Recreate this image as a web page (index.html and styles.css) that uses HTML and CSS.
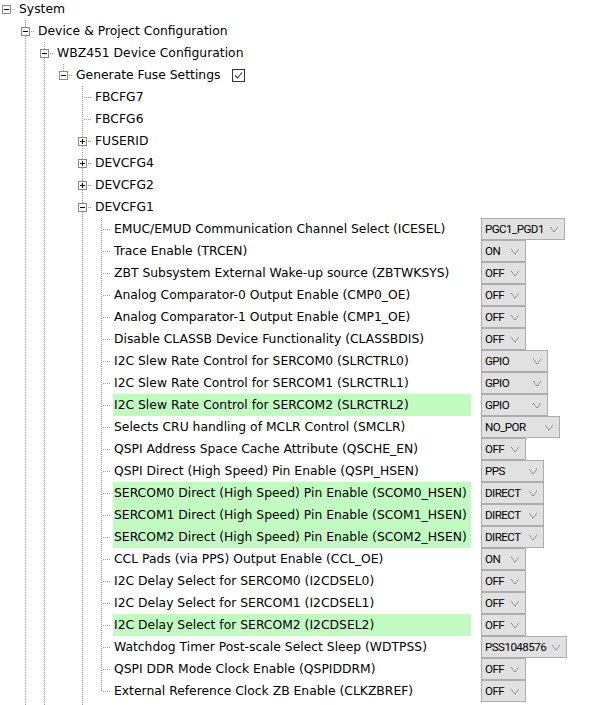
FILE: index.html
```html
<!DOCTYPE html>
<html>
<head>
<meta charset="utf-8">
<link rel="stylesheet" href="styles.css">
</head>
<body>
<div class="tree">
  <div class="row"><span class="c nd"><span class="bx mi"></span></span><span class="lbl">System</span></div>
  <div class="row"><span class="c"></span><span class="c nd up dn"><span class="bx mi"></span></span><span class="lbl">Device &amp; Project Configuration</span></div>
  <div class="row"><span class="c"></span><span class="c v"></span><span class="c nd up dn"><span class="bx mi"></span></span><span class="lbl">WBZ451 Device Configuration</span></div>
  <div class="row"><span class="c"></span><span class="c v"></span><span class="c v"></span><span class="c nd up"><span class="bx mi"></span></span><span class="lbl">Generate Fuse Settings</span>
    <svg class="chk" width="13" height="13" viewBox="0 0 13 13"><rect x="0.5" y="0.5" width="12" height="12" fill="#fff" stroke="#333"/><polyline points="3,6.5 5.5,9 10,3.5" fill="none" stroke="#333" stroke-width="1.1"/></svg>
  </div>
  <div class="row"><span class="c"></span><span class="c v"></span><span class="c v"></span><span class="c"></span><span class="c t"></span><span class="lbl">FBCFG7</span></div>
  <div class="row"><span class="c"></span><span class="c v"></span><span class="c v"></span><span class="c"></span><span class="c t"></span><span class="lbl">FBCFG6</span></div>
  <div class="row"><span class="c"></span><span class="c v"></span><span class="c v"></span><span class="c"></span><span class="c nd up dn"><span class="bx pl"></span></span><span class="lbl">FUSERID</span></div>
  <div class="row"><span class="c"></span><span class="c v"></span><span class="c v"></span><span class="c"></span><span class="c nd up dn"><span class="bx pl"></span></span><span class="lbl">DEVCFG4</span></div>
  <div class="row"><span class="c"></span><span class="c v"></span><span class="c v"></span><span class="c"></span><span class="c nd up dn"><span class="bx pl"></span></span><span class="lbl">DEVCFG2</span></div>
  <div class="row"><span class="c"></span><span class="c v"></span><span class="c v"></span><span class="c"></span><span class="c nd up dn"><span class="bx mi"></span></span><span class="lbl">DEVCFG1</span></div>

  <div class="row"><span class="c"></span><span class="c v"></span><span class="c v"></span><span class="c"></span><span class="c v"></span><span class="c t"></span><span class="lbl wide">EMUC/EMUD Communication Channel Select (ICESEL)</span><span class="dd w83">PGC1_PGD1<i></i></span></div>
  <div class="row"><span class="c"></span><span class="c v"></span><span class="c v"></span><span class="c"></span><span class="c v"></span><span class="c t"></span><span class="lbl wide">Trace Enable (TRCEN)</span><span class="dd w44">ON<i></i></span></div>
  <div class="row"><span class="c"></span><span class="c v"></span><span class="c v"></span><span class="c"></span><span class="c v"></span><span class="c t"></span><span class="lbl wide">ZBT Subsystem External Wake-up source (ZBTWKSYS)</span><span class="dd w44">OFF<i></i></span></div>
  <div class="row"><span class="c"></span><span class="c v"></span><span class="c v"></span><span class="c"></span><span class="c v"></span><span class="c t"></span><span class="lbl wide">Analog Comparator-0 Output Enable (CMP0_OE)</span><span class="dd w44">OFF<i></i></span></div>
  <div class="row"><span class="c"></span><span class="c v"></span><span class="c v"></span><span class="c"></span><span class="c v"></span><span class="c t"></span><span class="lbl wide">Analog Comparator-1 Output Enable (CMP1_OE)</span><span class="dd w44">OFF<i></i></span></div>
  <div class="row"><span class="c"></span><span class="c v"></span><span class="c v"></span><span class="c"></span><span class="c v"></span><span class="c t"></span><span class="lbl wide">Disable CLASSB Device Functionality (CLASSBDIS)</span><span class="dd w44">OFF<i></i></span></div>
  <div class="row"><span class="c"></span><span class="c v"></span><span class="c v"></span><span class="c"></span><span class="c v"></span><span class="c t"></span><span class="lbl wide">I2C Slew Rate Control for SERCOM0 (SLRCTRL0)</span><span class="dd w66">GPIO<i></i></span></div>
  <div class="row"><span class="c"></span><span class="c v"></span><span class="c v"></span><span class="c"></span><span class="c v"></span><span class="c t"></span><span class="lbl wide">I2C Slew Rate Control for SERCOM1 (SLRCTRL1)</span><span class="dd w66">GPIO<i></i></span></div>
  <div class="row"><span class="c"></span><span class="c v"></span><span class="c v"></span><span class="c"></span><span class="c v"></span><span class="c t"></span><span class="lbl wide hl">I2C Slew Rate Control for SERCOM2 (SLRCTRL2)</span><span class="dd w66">GPIO<i></i></span></div>
  <div class="row"><span class="c"></span><span class="c v"></span><span class="c v"></span><span class="c"></span><span class="c v"></span><span class="c t"></span><span class="lbl wide">Selects CRU handling of MCLR Control (SMCLR)</span><span class="dd w78">NO_POR<i></i></span></div>
  <div class="row"><span class="c"></span><span class="c v"></span><span class="c v"></span><span class="c"></span><span class="c v"></span><span class="c t"></span><span class="lbl wide">QSPI Address Space Cache Attribute (QSCHE_EN)</span><span class="dd w44">OFF<i></i></span></div>
  <div class="row"><span class="c"></span><span class="c v"></span><span class="c v"></span><span class="c"></span><span class="c v"></span><span class="c t"></span><span class="lbl wide">QSPI Direct (High Speed) Pin Enable (QSPI_HSEN)</span><span class="dd w62">PPS<i></i></span></div>
  <div class="row"><span class="c"></span><span class="c v"></span><span class="c v"></span><span class="c"></span><span class="c v"></span><span class="c t"></span><span class="lbl wide hl">SERCOM0 Direct (High Speed) Pin Enable (SCOM0_HSEN)</span><span class="dd w62">DIRECT<i></i></span></div>
  <div class="row"><span class="c"></span><span class="c v"></span><span class="c v"></span><span class="c"></span><span class="c v"></span><span class="c t"></span><span class="lbl wide hl">SERCOM1 Direct (High Speed) Pin Enable (SCOM1_HSEN)</span><span class="dd w62">DIRECT<i></i></span></div>
  <div class="row"><span class="c"></span><span class="c v"></span><span class="c v"></span><span class="c"></span><span class="c v"></span><span class="c t"></span><span class="lbl wide hl">SERCOM2 Direct (High Speed) Pin Enable (SCOM2_HSEN)</span><span class="dd w62">DIRECT<i></i></span></div>
  <div class="row"><span class="c"></span><span class="c v"></span><span class="c v"></span><span class="c"></span><span class="c v"></span><span class="c t"></span><span class="lbl wide">CCL Pads (via PPS) Output Enable (CCL_OE)</span><span class="dd w44">ON<i></i></span></div>
  <div class="row"><span class="c"></span><span class="c v"></span><span class="c v"></span><span class="c"></span><span class="c v"></span><span class="c t"></span><span class="lbl wide">I2C Delay Select for SERCOM0 (I2CDSEL0)</span><span class="dd w44">OFF<i></i></span></div>
  <div class="row"><span class="c"></span><span class="c v"></span><span class="c v"></span><span class="c"></span><span class="c v"></span><span class="c t"></span><span class="lbl wide">I2C Delay Select for SERCOM1 (I2CDSEL1)</span><span class="dd w44">OFF<i></i></span></div>
  <div class="row"><span class="c"></span><span class="c v"></span><span class="c v"></span><span class="c"></span><span class="c v"></span><span class="c t"></span><span class="lbl wide hl">I2C Delay Select for SERCOM2 (I2CDSEL2)</span><span class="dd w44">OFF<i></i></span></div>
  <div class="row"><span class="c"></span><span class="c v"></span><span class="c v"></span><span class="c"></span><span class="c v"></span><span class="c t"></span><span class="lbl wide">Watchdog Timer Post-scale Select Sleep (WDTPSS)</span><span class="dd w85">PSS1048576<i></i></span></div>
  <div class="row"><span class="c"></span><span class="c v"></span><span class="c v"></span><span class="c"></span><span class="c v"></span><span class="c t"></span><span class="lbl wide">QSPI DDR Mode Clock Enable (QSPIDDRM)</span><span class="dd w44">OFF<i></i></span></div>
  <div class="row"><span class="c"></span><span class="c v"></span><span class="c v"></span><span class="c"></span><span class="c v"></span><span class="c e"></span><span class="lbl wide">External Reference Clock ZB Enable (CLKZBREF)</span><span class="dd w44">OFF<i></i></span></div>
  <div class="row"><span class="c"></span><span class="c v"></span><span class="c v"></span><span class="c"></span><span class="c v"></span></div>
</div>
</body>
</html>
```
FILE: styles.css
```css
html, body {
  margin: 0;
  padding: 0;
  background: #fff;
  height: 705px;
  overflow: hidden;
}

.tree {
  --dv: repeating-linear-gradient(to bottom, #9a9a9a 0 1px, transparent 1px 2px);
  --dh: repeating-linear-gradient(to right, #9a9a9a 0 1px, transparent 1px 2px);
  margin: -2px 0 0 -3px;
  font-family: "DejaVu Sans", sans-serif;
  font-size: 12.35px;
  color: #000;
}

.row {
  display: flex;
  align-items: center;
  height: 22px;
  white-space: nowrap;
}

.c {
  flex: none;
  width: 19px;
  height: 22px;
  display: flex;
  align-items: center;
}

.c.v {
  background: var(--dv) 9px 0 / 1px 22px no-repeat;
}

.c.t {
  background: var(--dh) 11px 11px / 8px 1px no-repeat,
              var(--dv) 9px 0 / 1px 22px no-repeat;
}

.c.e {
  background: var(--dh) 11px 11px / 8px 1px no-repeat,
              var(--dv) 9px 0 / 1px 12px no-repeat;
}

.c.nd {
  background: var(--dh) 15px 11px / 4px 1px no-repeat;
}

.c.nd.up {
  background: var(--dh) 15px 11px / 4px 1px no-repeat,
              var(--dv) 9px 0 / 1px 7px no-repeat;
}

.c.nd.up.dn {
  background: var(--dh) 15px 11px / 4px 1px no-repeat,
              var(--dv) 9px 0 / 1px 22px no-repeat;
}

.bx {
  box-sizing: border-box;
  width: 9px;
  height: 9px;
  margin-left: 5px;
  border: 1px solid #8a8a8a;
  background: #fff;
  display: flex;
  align-items: center;
  justify-content: center;
  position: relative;
}

.bx::before {
  content: "";
  width: 5px;
  height: 1px;
  background: #000;
}

.bx.pl::after {
  content: "";
  position: absolute;
  left: 3px;
  top: 1px;
  width: 1px;
  height: 5px;
  background: #000;
}

.lbl {
  margin-left: 2px;
  padding-left: 1px;
  height: 22px;
  line-height: 22px;
  flex: none;
}

.lbl.wide {
  width: 358px;
  box-sizing: border-box;
}

.lbl.hl {
  background: #c2fbc2;
}

.chk {
  margin-left: 12px;
  flex: none;
}

.dd {
  flex: none;
  box-sizing: border-box;
  margin-left: 10px;
  height: 22px;
  border: 1px solid #adadad;
  background: #e1e1e1;
  display: flex;
  align-items: center;
  justify-content: space-between;
  padding: 0 6px 0 3px;
  font-family: Roboto, "Noto Sans", sans-serif;
  font-size: 11.6px;
  letter-spacing: -0.55px;
  color: #000;
}

.dd i {
  flex: none;
  width: 8px;
  height: 5px;
  background:
    linear-gradient(to top right, transparent calc(50% - 0.6px), #777 50%, transparent calc(50% + 0.6px)) 0 0 / 4px 5px no-repeat,
    linear-gradient(to top left, transparent calc(50% - 0.6px), #777 50%, transparent calc(50% + 0.6px)) 4px 0 / 4px 5px no-repeat;
}

.w44 { width: 45px; }
.w62 { width: 63px; }
.w66 { width: 67px; }
.w78 { width: 79px; }
.w83 { width: 84px; }
.w85 { width: 86px; }
```
